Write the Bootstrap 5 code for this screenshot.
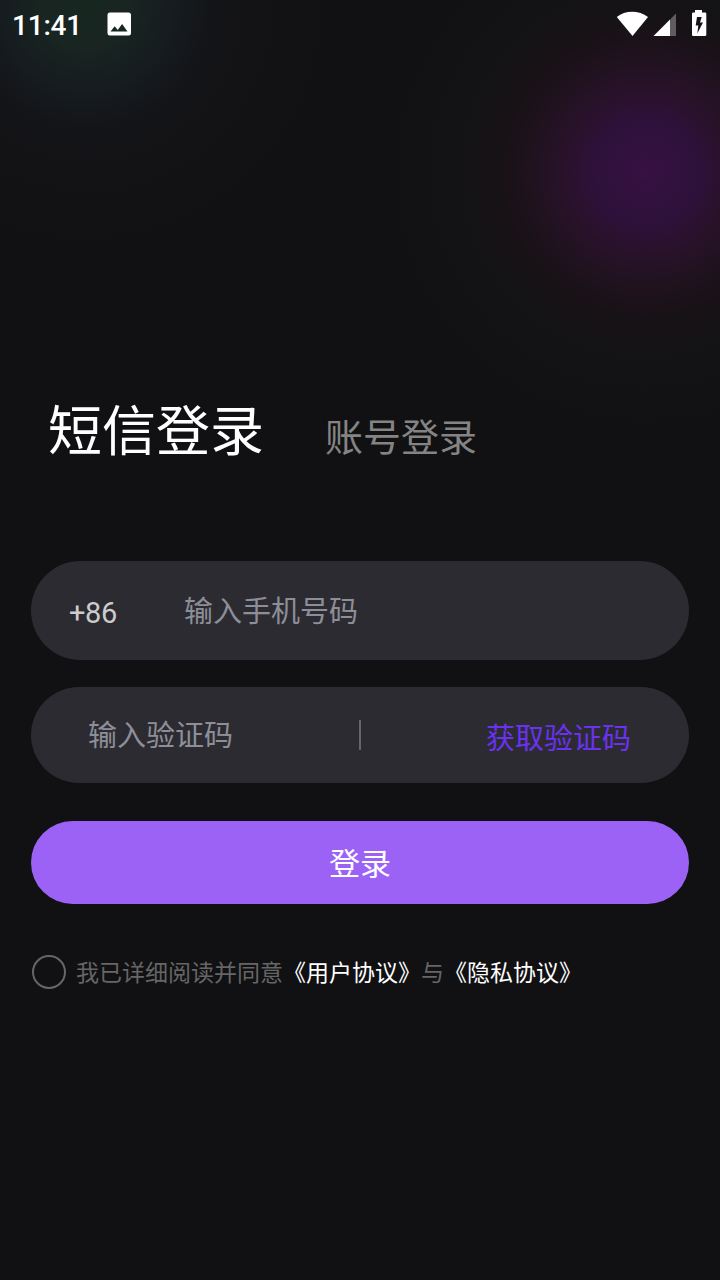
<!DOCTYPE html>
<html lang="zh-CN" data-bs-theme="dark">
<head>
<meta charset="utf-8">
<meta name="viewport" content="width=device-width, initial-scale=1">
<title>短信登录</title>
<link href="https://cdn.jsdelivr.net/npm/bootstrap@5.3.0/dist/css/bootstrap.min.css" rel="stylesheet">
<style>
  body {
    font-family: "Noto Sans CJK SC", "Liberation Sans", sans-serif;
    color: #fff;
    background:
      radial-gradient(circle 250px at 86px 4px, #182620 0, #182521 45px, #161c1f 85px, #141519 122px, rgba(19,19,21,.8) 165px, rgba(17,17,19,0) 250px),
      radial-gradient(circle 260px at 646px 172px, #361041 0, #2e113a 54px, #2a122d 76px, #1f121d 118px, #181216 144px, #131315 185px, rgba(17,17,19,0) 260px),
      #111113;
  }
  .screen { width: 720px; height: 1280px; }
  .status-bar { height: 48px; padding: 0 13px 0 12px; }
  .clock { font: 500 28px/52px Roboto, sans-serif; letter-spacing: -.2px; width: 95px; }
  .login-tabs { margin-top: 340px; padding-left: 48px; }
  .tab-main { font-size: 54px; line-height: 80px; }
  .tab-alt { font-size: 38px; line-height: 56px; margin-left: 61px; padding-top: 19px; color: #848484; }
  .login-form { margin-top: 93px; padding: 0 31px; }
  .pill { background: #2d2b32; border-radius: 50px; }
  .pill-phone { height: 99px; }
  .pill-code { height: 96px; margin-top: 27px; }
  .prefix { font: 400 29px/40px Roboto, sans-serif; letter-spacing: -.4px; color: #ccc; width: 115px; margin-left: 38px; padding-top: 4px; }
  .field { background: none; border: 0; border-radius: 0; padding: 0; font-size: 29px; line-height: 44px; height: 44px; color: #fff; }
  .field:focus { background: none; box-shadow: none; }
  .field::placeholder { color: #8d8f98; opacity: 1; }
  .field-phone { margin: -3px 38px 0 0; }
  .field-code { margin: -4px 0 0 57px; width: 271px; }
  .divider { width: 2px; height: 30px; background: #666; }
  .get-code { font-size: 29px; line-height: 44px; color: #6a32f0; margin: 2px 58px 0 auto; }
  .btn-login { --bs-btn-color: #fff; --bs-btn-bg: #9b62f5; --bs-btn-border-width: 0; --bs-btn-hover-bg: #8b52e5; --bs-btn-hover-color: #fff;
    height: 83px; margin-top: 38px; padding: 0 0 2px; font-size: 31px; line-height: 46px; }
  .agreement { margin-top: 49px; padding-left: 1px; font-size: 23px; line-height: 36px; color: #666; }
  .agreement a { color: #fff; }
  .check-ring { width: 34px; height: 34px; border: 2px solid #666; margin: 1px 10px 0 0; }
</style>
</head>
<body>
<main class="screen d-flex flex-column overflow-hidden">
  <header class="status-bar d-flex">
    <span class="clock">11:41</span>
    <svg width="26" height="48" viewBox="0 -12.500 26 48"><path fill="#fff" fill-rule="evenodd" d="M3 0h18.500a2.500 2.500 0 0 1 2.500 2.500v18a2.500 2.500 0 0 1-2.500 2.500H3a2.500 2.500 0 0 1-2.500-2.500v-18A2.500 2.500 0 0 1 3 0zm.5 19h17l-5.400-7.400-4.400 5.800-3-3.700z"/></svg>
    <svg class="ms-auto" width="92" height="48" viewBox="0 0 92 48">
      <path fill="#fff" d="M1.800 17C10 10 24 10 33 17L17.500 36z"/>
      <path fill="#fff" d="M38.500 36L55 19.500V36z"/>
      <path fill="#605d62" d="M55 19.500L61 13.500V36h-6z"/>
      <path fill="#fff" fill-rule="evenodd" d="M80 10h7v2.500h3a1.300 1.300 0 0 1 1.300 1.300V34.700A1.300 1.300 0 0 1 90 36H78.300A1.300 1.300 0 0 1 77 34.700V13.800a1.300 1.300 0 0 1 1.300-1.300H80zM82 17l-1.300 8.500h2.600L82.300 33.500 88 22.500h-3l1.700-5.500z"/>
    </svg>
  </header>

  <nav class="login-tabs d-flex align-items-start">
    <a class="tab-main text-white text-decoration-none" href="#">短信登录</a>
    <a class="tab-alt text-decoration-none" href="#">账号登录</a>
  </nav>

  <form class="login-form">
    <div class="pill pill-phone d-flex align-items-center">
      <span class="prefix flex-shrink-0">+86</span>
      <input class="form-control field field-phone" type="tel" placeholder="输入手机号码">
    </div>
    <div class="pill pill-code d-flex align-items-center">
      <input class="form-control field field-code" type="text" placeholder="输入验证码">
      <span class="divider"></span>
      <a class="get-code text-decoration-none" href="#">获取验证码</a>
    </div>
    <button class="btn btn-login rounded-pill w-100" type="button">登录</button>
    <div class="agreement d-flex align-items-center text-nowrap">
      <span class="check-ring rounded-circle flex-shrink-0"></span>
      <span>我已详细阅读并同意<a class="text-decoration-none" href="#">《用户协议》</a>与<a class="text-decoration-none" href="#">《隐私协议》</a></span>
    </div>
  </form>
</main>
<script src="https://cdn.jsdelivr.net/npm/bootstrap@5.3.0/dist/js/bootstrap.bundle.min.js"></script>
</body>
</html>
